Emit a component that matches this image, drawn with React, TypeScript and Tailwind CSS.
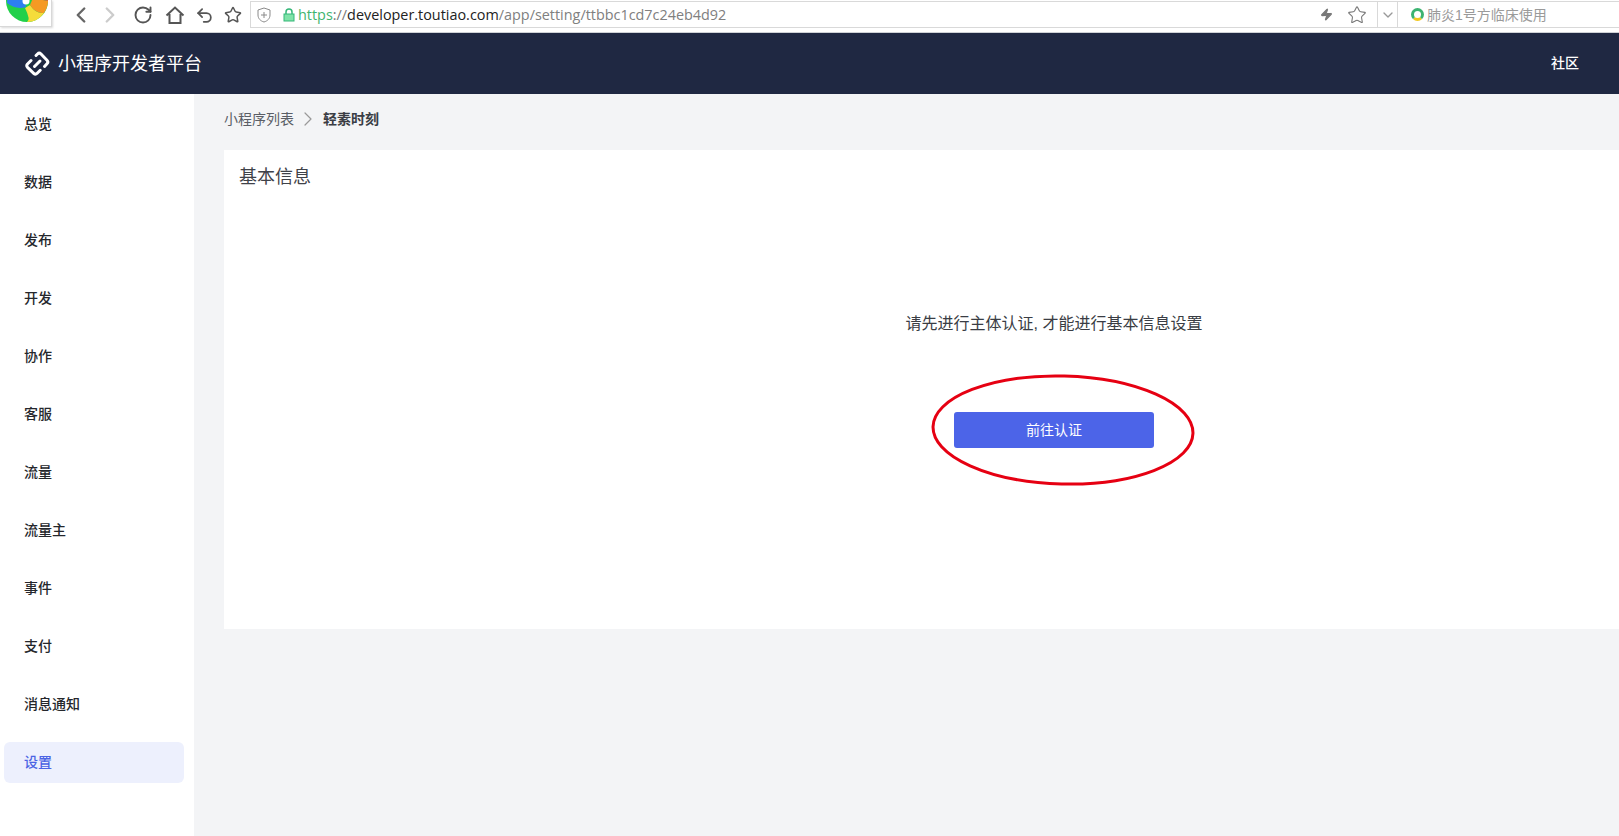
import { ChevronLeft, ChevronRight, RotateCw, Undo2, Star, ChevronDown, Zap } from "lucide-react";

const menu = ["总览", "数据", "发布", "开发", "协作", "客服", "流量", "流量主", "事件", "支付", "消息通知", "设置"];

function BrowserLogo() {
  return (
    <div className="w-[52px] h-[27px] bg-white border-r border-b border-[#d8d8d8] shadow-[1px_1px_2px_rgba(0,0,0,0.15)] overflow-hidden shrink-0">
      <svg width="52" height="27" viewBox="0 0 52 27">
        <circle cx="27" cy="1" r="21" fill="#22d04a" />
        <path d="M25 8 Q31 20 27 22 A21 21 0 0 0 44 13 Q36 14 30 5 Z" fill="#f5dc3a" />
        <path d="M30 5 Q36 14 44 13 A21 21 0 0 0 48 1 L33 -2 Z" fill="#f59a23" />
        <path d="M33 -2 L48 1 A21 21 0 0 0 46 -8 L32 -6 Z" fill="#ef5b3a" />
        <path d="M26 7 Q16 10 7 3 L8 -8 L24 -4 Z" fill="#2d7ff0" />
        <circle cx="26" cy="1" r="3.500" fill="#ffffff" />
      </svg>
    </div>
  );
}

function BrowserBar() {
  return (
    <div className="h-[33px] bg-white flex items-start border-b border-[#cfd2d6] shrink-0">
      <BrowserLogo />
      <div className="flex items-center h-[30px] shrink-0">
        <ChevronLeft size={26} strokeWidth={2.200} className="ml-[16px] text-[#666]" />
        <ChevronRight size={26} strokeWidth={2.200} className="ml-[3px] text-[#ccc]" />
        <RotateCw size={20} strokeWidth={2.300} className="ml-[10px] text-[#555]" />
        <svg width="20" height="20" viewBox="0 0 20 20" fill="none" stroke="#555" strokeWidth="2" className="ml-[12px]">
          <path d="M1.500 10.500 10 2.500l8.500 8M4.500 9v9h11V9" />
        </svg>
        <Undo2 size={19} strokeWidth={2.200} className="ml-[10px] text-[#555]" />
        <Star size={18} strokeWidth={2} className="ml-[10px] text-[#555]" />
      </div>
      <div className="ml-[8px] flex-1 h-[27px] mt-[1px] border border-[#d9d9d9] border-r-0 flex items-center text-[14.4px] font-['Open_Sans','Liberation_Sans',sans-serif] min-w-0">
        <svg width="14" height="16" viewBox="0 0 14 16" fill="none" stroke="#8a8a8a" strokeWidth="1" className="ml-[6px] shrink-0">
          <path d="M7 1 1 3v5c0 3.500 2.500 6 6 7 3.500-1 6-3.500 6-7V3L7 1ZM7 5v6M4 8h6" />
        </svg>
        <svg width="14" height="14" viewBox="0 0 14 14" className="ml-[11px] shrink-0">
          <path d="M4 6V4a3 3 0 0 1 6 0v2" fill="none" stroke="#35b779" strokeWidth="1.500" />
          <rect x="2" y="6" width="10" height="7" fill="#7fe3a8" stroke="#35b779" />
        </svg>
        <div className="ml-[2px] w-[1024px] whitespace-nowrap shrink-0">
          <span className="text-[#3fb56f]">https</span>
          <span className="text-[#777]">://</span>
          <span className="text-[#222]">developer.toutiao.com</span>
          <span className="text-[#808080]">/app/setting/ttbbc1cd7c24eb4d92</span>
        </div>
        <Zap size={13} className="ml-[-2px] text-[#777] fill-[#777] shrink-0" />
        <Star size={20} strokeWidth={1.300} className="ml-[14px] text-[#777] shrink-0" />
        <div className="ml-[10px] w-[21px] h-full border-x border-[#d9d9d9] flex items-center justify-center shrink-0">
          <ChevronDown size={16} className="text-[#999]" />
        </div>
        <div className="ml-[13px] w-[13px] h-[13px] rounded-full border-[3px] border-[#3cb371] border-b-[#f2c81e] shrink-0" />
        <div className="ml-[3px] text-[14px] leading-none text-[#9a9a9a] whitespace-nowrap font-['Liberation_Sans','Noto_Sans_CJK_SC',sans-serif]">
          肺炎1号方临床使用
        </div>
      </div>
    </div>
  );
}

function Header() {
  return (
    <header className="h-[61px] bg-[#1f2842] flex items-center pl-[24px] pr-[40px] text-white shrink-0">
      <svg width="27" height="27" viewBox="0 0 27 27" fill="none" stroke="#ffffff" strokeWidth="3" strokeLinecap="round" strokeLinejoin="round">
        <path d="M12 5.500 13.500 4a2.500 2.500 0 0 1 3.500 0l6 6.200a2.500 2.500 0 0 1 0 3.500L20.500 16.500" />
        <path d="M7 10.500 3.500 14a2.500 2.500 0 0 0 0 3.300l6.200 6a2.500 2.500 0 0 0 3.500 0l3-3" />
        <path d="m10.500 16.500 5.500-5.500" />
      </svg>
      <span className="ml-[7px] text-[18px] leading-none">小程序开发者平台</span>
      <span className="ml-auto text-[14px] font-medium">社区</span>
    </header>
  );
}

function Sidebar() {
  return (
    <aside className="w-[194px] shrink-0 bg-white pt-[10px] pl-[4px] pr-[10px] flex flex-col gap-[18px]">
      {menu.map((item) => (
        <div
          key={item}
          className={
            item === "设置"
              ? "h-[41px] -mb-px rounded-[6px] bg-[#edf0fd] pl-[20px] flex items-center text-[14px] font-medium text-[#4c64e4]"
              : "h-[40px] pl-[20px] flex items-center text-[14px] font-medium text-[#25272c]"
          }
        >
          {item}
        </div>
      ))}
    </aside>
  );
}

export default function App() {
  return (
    <div className="w-[1619px] h-[836px] overflow-hidden flex flex-col bg-[#f3f4f6] font-['Liberation_Sans','Noto_Sans_CJK_SC',sans-serif]">
      <BrowserBar />
      <Header />
      <div className="flex flex-1 min-h-0">
        <Sidebar />
        <main className="pl-[30px] flex-1 min-w-0">
          <div className="h-[56px] flex items-center pb-[6px] text-[14px] text-[#5a5e66]">
            <span>小程序列表</span>
            <ChevronRight size={24} strokeWidth={1.200} className="ml-[2px] mr-[3px] text-[#999]" />
            <span className="font-semibold text-[#3a3d44]">轻素时刻</span>
          </div>
          <div className="w-[1660px] h-[479px] bg-white flex flex-col items-center">
            <div className="self-start ml-[15px] mt-[14px] text-[18px] leading-[26px] text-[#3f4249]">基本信息</div>
            <p className="mt-[122px] text-[16px] leading-[24px] text-[#3a3d44]">请先进行主体认证, 才能进行基本信息设置</p>
            <div className="relative mt-[76px]">
              <button type="button" className="w-[200px] h-[36px] rounded-[3px] bg-[#4c64e8] text-white text-[14px]">
                前往认证
              </button>
              <svg width="270" height="120" viewBox="0 0 270 120" fill="none" className="absolute left-[-26px] top-[-42px]">
                <ellipse cx="135" cy="60" rx="130" ry="54" stroke="#e60012" strokeWidth="3" transform="rotate(1.500 135 60)" />
              </svg>
            </div>
          </div>
        </main>
      </div>
    </div>
  );
}
